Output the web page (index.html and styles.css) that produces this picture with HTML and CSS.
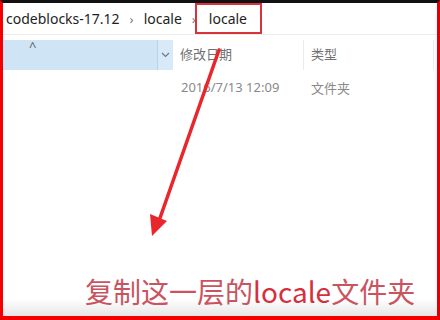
FILE: index.html
```html
<!DOCTYPE html>
<html lang="zh-CN">
<head>
  <meta charset="UTF-8" />
  <meta name="viewport" content="width=device-width,initial-scale=1.0"/>
  <title>locale</title>
  <link rel="stylesheet" href="styles.css">
</head>
<body>
  <div id="frame">
    <!-- Breadcrumb bar -->
    <div class="crumbs">
      <span class="crumb">codeblocks-17.12</span>
      <span class="sep">›</span>
      <span class="crumb">locale</span>
      <span class="sep">›</span>
      <span class="crumb current">locale</span>
    </div>

    <!-- Column headers -->
    <div class="header">
      <div class="nav">
        <span class="caret-up">^</span>
        <span class="nav-drop">
          <svg width="9" height="6" viewBox="0 0 9 6"><path d="M1 1 L4.5 4.5 L8 1" fill="none" stroke="#6b7a88" stroke-width="1.2"/></svg>
        </span>
      </div>
      <div class="col date">修改日期</div>
      <div class="col type">类型</div>
    </div>

    <!-- File row -->
    <div class="row">
      <div class="spacer"></div>
      <div class="cell date">2016/7/13 12:09</div>
      <div class="cell type">文件夹</div>
    </div>

    <div class="stage">
      <p class="caption">复制这一层的<span class="hl">locale</span>文件夹</p>
    </div>

    <!-- Annotation arrow -->
    <svg class="arrow" width="440" height="320" viewBox="0 0 440 320">
      <line x1="219" y1="50" x2="160" y2="218" stroke="#e8262b" stroke-width="3.5" stroke-linecap="round"/>
      <polygon points="152,236 150,214 167,221" fill="#e8262b"/>
    </svg>
  </div>
</body>
</html>
```

FILE: styles.css
```css
/* ---------- Global ---------- */
* {
  box-sizing: border-box;
}
html, body {
  margin: 0;
  padding: 0;
  background: #fff;
}
#frame {
  position: relative;
  width: 440px;
  height: 320px;
  border-top: 3px solid #111;
  border-left: 3px solid #f40000;
  border-right: 3px solid #e00000;
  border-bottom: 4px solid #f40000;
  display: flex;
  flex-direction: column;
  font-family: "Noto Sans", "Noto Sans CJK SC", sans-serif;
  overflow: hidden;
}

/* ---------- Breadcrumbs ---------- */
.crumbs {
  height: 32px;
  display: flex;
  align-items: center;
  border-bottom: 1px solid #ececec;
  font-size: 14px;
  color: #1e1e1e;
  padding-left: 2px;
}
.crumb {
  padding: 0 1px;
}
.sep {
  color: #777;
  font-size: 13px;
  margin: 0 9px;
}
.crumb.current {
  align-self: stretch;
  display: flex;
  align-items: center;
  border: 2px solid #d8333b;
  padding: 0 13px 0 12px;
  margin-left: -10px;
}

/* ---------- Header ---------- */
.header {
  margin-top: 5px;
  height: 30px;
  display: flex;
  font-family: "Noto Sans CJK SC", sans-serif;
  font-size: 13px;
  color: #707070;
}
.nav {
  width: 170px;
  background: #cfe4f5;
  display: flex;
  justify-content: space-between;
}
.caret-up {
  margin: -3px 0 0 26px;
  color: #666;
  font-family: "Noto Sans", sans-serif;
  font-size: 13px;
}
.nav-drop {
  width: 16px;
  border-left: 1px solid #bdd2e3;
  background: #d8e9f7;
  display: flex;
  align-items: center;
  justify-content: center;
}
.col {
  display: flex;
  align-items: center;
  padding-left: 7px;
  padding-bottom: 3px;
  border-right: 1px solid #ececec;
}
.col.date {
  width: 131px;
}
.col.type {
  width: 130px;
}

/* ---------- Row ---------- */
.row {
  height: 34px;
  display: flex;
  align-items: center;
  font-size: 13px;
  color: #8a8a8a;
}
.spacer {
  width: 170px;
}
.cell {
  padding-left: 8px;
}
.cell.date {
  width: 131px;
  font-family: "Noto Sans", sans-serif;
}
.cell.type {
  padding-left: 7px;
  font-family: "Noto Sans CJK SC", sans-serif;
}

/* ---------- Caption ---------- */
.stage {
  flex: 1;
  display: flex;
  align-items: flex-end;
  background: linear-gradient(to bottom, #fff 92%, #e6e6e6 100%);
}
.caption {
  margin: 0 0 8px 82px;
  font-family: "Noto Sans CJK SC", sans-serif;
  font-size: 28px;
  line-height: 34px;
  color: #c9545f;
}
.hl {
  color: #d4303c;
}

/* ---------- Arrow ---------- */
.arrow {
  position: absolute;
  top: -3px;
  left: -3px;
  pointer-events: none;
}
```
